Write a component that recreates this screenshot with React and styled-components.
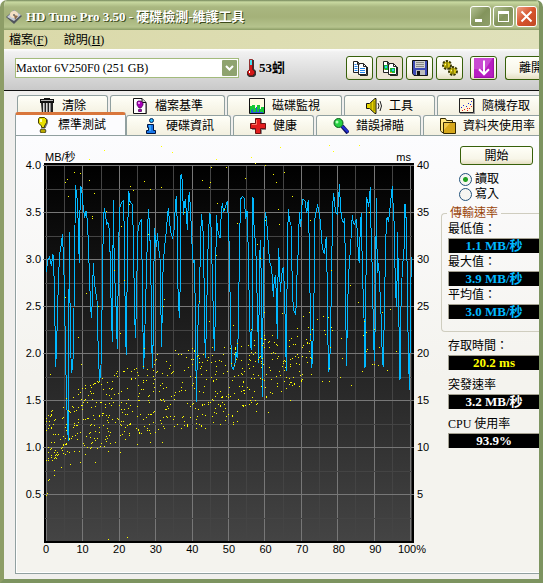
import React, { useState } from "react";
import styled, { createGlobalStyle } from "styled-components";

const GlobalStyle = createGlobalStyle`
  * {
    box-sizing: border-box;
  }
  body {
    margin: 0;
    background: #ffffff;
    color: #000000;
    font-family: "Liberation Serif", "Noto Sans CJK TC", serif;
    font-size: 12px;
    line-height: 16px;
  }
  button, select, input {
    font: inherit;
    color: inherit;
    margin: 0;
  }
`;

/* ---------- icons ---------- */

const Icon = ({ size = 16, children }) => (
  <svg width={size} height={size} viewBox="0 0 16 16" aria-hidden="true">
    {children}
  </svg>
);

const DriveIcon = () => (
  <Icon>
    <path d="M0 8 L8 1 L16 7 L8 15 Z" fill="#50545c" />
    <path d="M1 8 L8 1 L15 6 L8 12 Z" fill="#c4cad6" />
    <ellipse cx="8" cy="5.500" rx="4" ry="3.500" fill="#f4dfc4" />
    <path d="M8 6 L12 7 L9 11 Z" fill="#8b6b4a" />
    <circle cx="8" cy="6" r="1" fill="#6a6a6a" />
  </Icon>
);

const TrashIcon = () => (
  <Icon>
    <path d="M5 0h6v1H5zM1 1h14v4H1z" fill="#111" />
    <path d="M2 2h12v1H2z" fill="#b5b5b5" />
    <path d="M2 5h12v11H3z" fill="#222" />
    <path d="M4 5h1v10H4zM7 5h1v10H7zM10 5h1v10h-1z" fill="#d8d8d8" />
    <path d="M5 5h1v10H5zM8 5h1v10H8zM11 5h1v10h-1z" fill="#8a8a8a" />
  </Icon>
);

const FileMarkIcon = () => (
  <Icon>
    <path d="M3 2h9l3 4v10H3z" fill="#777" />
    <path d="M1.500 .5h8.500l4 4v11H1.500z" fill="#fff" stroke="#111" />
    <path d="M10 .5v4h4" fill="#ccc" stroke="#111" />
    <path d="M6 3h3l2 2v2l-2 3H7L5 7V4z" fill="#a800b8" stroke="#42004a" strokeWidth=".7" />
    <path d="M6.500 11.500h3v2h-3z" fill="#a800b8" stroke="#42004a" strokeWidth=".7" />
    <path d="M6 4h2v2H6z" fill="#ef8cf6" />
  </Icon>
);

const MonitorIcon = () => (
  <Icon>
    <path d="M.5.5h15v15H.5z" fill="#fffbe0" stroke="#111" />
    <path d="M1 8h2V7h3v3h2V7h3v4h1V9h3v6H1z" fill="#16c934" />
    <path d="M2 12h1v-1h1v3h3V9h1v5h2v-3h1v3h3v1H2z" fill="#2456d8" />
  </Icon>
);

const SpeakerIcon = () => (
  <Icon>
    <path d="M.5 5.500h3L9 .5h1v15H9l-5.500-5h-3z" fill="#e7d600" stroke="#111" />
    <path d="M5 4v8M8 3v10" stroke="#807400" />
    <path d="M12 5q2 3 0 6M14 3q3 5 0 10" fill="none" stroke="#222" />
  </Icon>
);

const ScatterIcon = () => (
  <Icon>
    <path d="M1 1h15v15H1z" fill="#999" />
    <path d="M.5.5h14v14H.5z" fill="#fff6dc" stroke="#222" />
    <path d="M2 9h1v1H2zM4 7h1v1H4zM7 8h1v1H7zM9 5h1v1H9zM11 6h1v1h-1zM12 3h1v1h-1z" fill="#1727e0" />
    <path d="M3 12h1v1H3zM5 11h1v1H5zM8 12h1v1H8zM8 10h1v1H8zM10 10h1v1h-1zM12 8h1v1h-1z" fill="#e02020" />
  </Icon>
);

const BangIcon = () => (
  <Icon>
    <path d="M5 1h6l2 2v3l-2 4v1H7v-2L4 7V3z" fill="#777" />
    <path d="M4.500.5h5l2 2v3l-2 3.500v1.500h-3V9l-3-3V2z" fill="#e8df00" stroke="#474200" />
    <path d="M5 2h2v3H5z" fill="#ffffb0" />
    <path d="M6 12h4l1 2-1 2H6l-1-2z" fill="#b9a900" stroke="#222" strokeWidth=".8" />
  </Icon>
);

const InfoIcon = () => (
  <Icon>
    <circle cx="8.500" cy="2.500" r="2" fill="#22b8ff" stroke="#001c50" />
    <path d="M4.500 6.500h6v6h2v3h-9v-3h2v-3h-1z" fill="#1976e8" stroke="#001440" />
    <path d="M6 7h2v6H6z" fill="#39a8ff" />
  </Icon>
);

const CrossIcon = () => (
  <Icon>
    <path d="M6 1h6v5h4v6h-4v4H6v-4H2V6h4z" fill="#888" />
    <path d="M5.500.5h5v5h5v5h-5v5h-5v-5h-5v-5h5z" fill="#e21d1d" stroke="#6c1010" />
    <path d="M6.500 2v4.500H2" fill="none" stroke="#ff7c68" />
  </Icon>
);

const SearchIcon = () => (
  <Icon>
    <path d="M9 8l6 7" stroke="#101060" strokeWidth="4" />
    <path d="M9 8l6 6" stroke="#2330d8" strokeWidth="2" />
    <circle cx="5.500" cy="5" r="4.500" fill="#25cf42" stroke="#0b5c1d" />
    <circle cx="4" cy="4" r="1.500" fill="#b4ffb8" />
  </Icon>
);

const FolderIcon = () => (
  <Icon>
    <path d="M.5.5h5l1 2h6v12H2l-1.500-2z" fill="#ffe680" stroke="#342900" />
    <path d="M3.500 4.500h12v11h-12z" fill="#d6a71b" stroke="#342900" />
    <path d="M4 5h6l-6 7z" fill="#efc74a" />
  </Icon>
);

const CopyIcon = ({ picture }) => (
  <Icon>
    <path d="M1.500 1.500h4l3 3v8h-7z" fill="#fff" stroke="#222" />
    <path d="M6.500 3.500h5l3 3v8h-8z" fill="#fff" stroke="#222" />
    <path d="M11.500 3.500v3h3M5.500 1.500v3h2M15.500 7v8.500H8" fill="none" stroke="#222" />
    {picture ? (
      <>
        <path d="M2 5h4v5H2zM8 8h5v5H8z" fill="#16b43a" />
        <path d="M3 6h2v2H3zM10 9h2v2h-2z" fill="#2ec9ff" />
        <path d="M2 9h1v1H2zM8 12h2v1H8z" fill="#e8a020" />
      </>
    ) : (
      <path d="M2.500 4.500h2M2.500 6.500h3M2.500 8.500h3M2.500 10.500h3M8 8.500h5M8 10.500h5M8 12.500h5" stroke="#2385e8" />
    )}
  </Icon>
);

const SaveIcon = () => (
  <Icon>
    <path d="M.5.5h15v15H2l-1.500-2z" fill="#3c48b4" stroke="#111" />
    <path d="M3 1h10v7H3z" fill="#d0d0d0" />
    <path d="M4 2.500h8M4 4.500h8M4 6.500h8" stroke="#888" />
    <path d="M4 10h9v5H4z" fill="#bdbdbd" />
    <path d="M5 11h3v4H5z" fill="#111" />
  </Icon>
);

// Two gears, one overlapping the other.
const ToolsIcon = () => (
  <Icon>
    <circle cx="5" cy="5" r="3.500" fill="#d8c713" stroke="#3b3900" strokeWidth="3" strokeDasharray="2 1" />
    <circle cx="5" cy="5" r="3" fill="#d8c713" />
    <path d="M5 2v4M3 7h3" stroke="#5a5600" />
    <circle cx="11" cy="11" r="3.500" fill="#d8c713" stroke="#3b3900" strokeWidth="3" strokeDasharray="2 1" />
    <circle cx="11" cy="11" r="3" fill="#d8c713" />
    <path d="M11 8v4M9 13h3" stroke="#5a5600" />
    <path d="M3 4h1v1H3zM9 10h1v1H9z" fill="#fff9a0" />
  </Icon>
);

const DownIcon = () => (
  <Icon size={20}>
    <path d="M0 0h16v16H0z" fill="#a010ac" />
    <path d="M0 0h15v15H0z" fill="#b81fc2" />
    <path d="M0 0h15L9 9H0z" fill="#c94bd2" />
    <path d="M8 2v11M4 9l4 4 4-4" fill="none" stroke="#fff" strokeWidth="1.600" />
  </Icon>
);

const Thermometer = () => (
  <svg width="11" height="18" viewBox="0 0 11 18" aria-hidden="true">
    <path d="M4 1h4v9l2 2v4l-2 2H3l-2-2v-3l3-3z" fill="#333" />
    <path d="M3.500.5h3v10l2 2v2l-2 2h-3l-2-2v-2l2-2z" fill="#d31818" stroke="#701010" strokeWidth=".7" />
    <path d="M4 1h2v5H4z" fill="#45dff0" />
    <path d="M3 12h1v2H3z" fill="#fff" />
  </svg>
);

/* ---------- window frame ---------- */

const Window = styled.div`
  position: relative;
  display: flex;
  flex-direction: column;
  min-height: 100vh;
  border: solid;
  border-width: 0 4px 4px;
  border-color: #8d9d67 #7d9460 #7d9460 #8d9d67;
  border-radius: 7px 7px 0 0;
  background: #f0f0ee;
  overflow: hidden;
`;

const CornerMark = styled.svg`
  position: absolute;
  top: 0;
  left: -4px;
`;

const TitleBar = styled.header`
  display: flex;
  align-items: center;
  height: 30px;
  margin: 0 -4px;
  padding: 3px 6px 0 6px;
  background: linear-gradient(#73865a 0, #c9d9a1 2px, #a9b780 7px, #a4b179 17px, #b5c38d 27px, #8b9c65 30px);
`;

const Title = styled.h1`
  flex: 1;
  margin: 0 0 0 4px;
  color: #ffffff;
  font-size: 13px;
  line-height: 18px;
  text-shadow: 1px 1px 0 #3c4a1c;
  white-space: nowrap;
`;

const CaptionButtons = styled.div`
  display: flex;
  gap: 2px;
`;

const CaptionButton = styled.button`
  width: 21px;
  height: 21px;
  padding: 0;
  border: 1px solid #ffffff;
  border-radius: 3px;
  background: ${(props) =>
    props.$close
      ? "linear-gradient(135deg, #eda287, #d6532c 50%, #c04a24)"
      : "linear-gradient(135deg, #b3c193, #83945c 50%, #90a06c)"};

  svg {
    display: block;
  }
`;

const MenuBar = styled.nav`
  display: flex;
  gap: 16px;
  height: 19px;
  padding-left: 5px;
  background: linear-gradient(90deg, #dad9a9, #e0e1bb);
`;

const MenuItem = styled.button`
  padding: 0;
  border: 0;
  background: none;
  line-height: 18px;
`;

const Toolbar = styled.div`
  display: flex;
  align-items: center;
  height: 42px;
  padding: 0 0 3px 11px;
  border-bottom: 1px solid #101010;
  background: linear-gradient(#ffffff 0, #f1f1f1 3px, #c9c9c9 100%);
`;

const DriveField = styled.label`
  position: relative;
  flex: 0 1 224px;
  height: 20px;
`;

const DriveSelect = styled.select`
  display: block;
  width: 100%;
  height: 100%;
  padding: 0 20px 0 0;
  border: 1px solid #a3bb7c;
  border-radius: 0;
  background: #ffffff;
  appearance: none;
`;

const DropArrow = styled.svg`
  position: absolute;
  top: 2px;
  right: 2px;
  pointer-events: none;
`;

const Temperature = styled.output`
  display: flex;
  align-items: center;
  gap: 2px;
  margin: 0 auto 0 7px;
  font-size: 13px;
  font-weight: bold;
`;

const Actions = styled.div`
  display: flex;
  flex: none;
  gap: 3px;
`;

const PushButton = styled.button`
  display: flex;
  align-items: center;
  justify-content: center;
  height: ${(props) => (props.$tool ? "24px" : "19px")};
  width: ${(props) => (props.$tool ? "27px" : "73px")};
  padding: 0;
  border: 1px solid #37600a;
  border-radius: 3px;
  background: ${(props) =>
    props.$pressed ? "#ebe3d3" : "linear-gradient(#fffff8, #f7f5e8 70%, #e5dfc2)"};
`;

const ActionGroup = styled.div`
  display: flex;
  margin-left: 4px;
`;

const ExitButton = styled(PushButton)`
  justify-content: flex-start;
  height: 24px;
  width: 34px;
  padding-left: 13px;
  border-right: 0;
  border-radius: 3px 0 0 3px;
  margin-left: 5px;
  overflow: hidden;
  white-space: nowrap;
`;

/* ---------- tabs ---------- */

const Content = styled.main`
  display: flex;
  flex: 1;
  flex-direction: column;
  padding: 3px 0 5px 11px;
  background: #f0efed;
  overflow: hidden;
`;

const TabRow = styled.div`
  display: flex;
  align-items: flex-end;
  gap: 2px;
  height: ${(props) => (props.$front ? "20px" : "21px")};
  padding-left: ${(props) => (props.$front ? "0" : "2px")};
`;

const Tab = styled.button`
  display: flex;
  flex: none;
  align-items: center;
  gap: 7px;
  height: ${(props) => (props.$active ? "23px" : "20px")};
  padding: 0 ${(props) => (props.$active ? "19px" : props.$narrow ? "16px" : "21px")};
  margin-right: ${(props) => (props.$active ? "-2px" : "0")};
  border: solid #91a0a0;
  border-width: ${(props) => (props.$active ? "3px 1px 0" : "1px 1px 0")};
  border-top-color: ${(props) => (props.$active ? "#d9763c" : "#91a0a0")};
  border-radius: 3px 3px 0 0;
  background: ${(props) => (props.$active ? "#fcfcfe" : "linear-gradient(#fffff8, #f3f0e0)")};
  white-space: nowrap;
`;

const Panel = styled.section`
  display: flex;
  flex: 1;
  border: 1px solid #91a0a0;
  border-right: 0;
  background: linear-gradient(#fcfcfe, #f4f3ee 55%);
  box-shadow: inset 1px -1px 0 #ffffff;
`;

/* ---------- chart ---------- */

const Chart = styled.figure`
  display: grid;
  flex: 1;
  min-width: 0;
  grid-template-columns: 28px minmax(0, 1fr) 27px;
  grid-template-rows: 27px minmax(300px, 1fr) 30px;
  margin: 0;
  font-family: "Liberation Sans", "Noto Sans CJK TC", sans-serif;
  font-size: 11px;
  line-height: 12px;
`;

const Units = styled.figcaption`
  display: flex;
  grid-area: 1 / 2;
  align-items: flex-end;
  justify-content: space-between;
  padding: 0 3px 0 1px;
`;

const PlotFrame = styled.div`
  grid-area: 2 / 2;
  padding: 2px;
  background: #000000;
`;

const Plot = styled.svg`
  display: block;
  width: 100%;
  height: 100%;
  overflow: visible;
`;

const Scale = styled.div`
  display: flex;
  flex-direction: column;
  grid-area: 2 / ${(props) => (props.$align === "right" ? 1 : 3)};
  justify-content: space-between;
  padding: 2px 3px;
  text-align: ${(props) => props.$align};
`;

const ScaleLabel = styled.span`
  height: 0;
  line-height: 0;
`;

const Percents = styled.div`
  display: flex;
  grid-area: 3 / 2;
  justify-content: space-between;
  padding: 0 2px;
`;

const Percent = styled.span`
  display: flex;
  justify-content: center;
  width: 0;
`;

// Transfer rate curve, three units per pixel, origin of the plot at 93,60.
const transfer = `
94,380 98,345 104,335 109,363 114,328 118,415 122,667 124,620 127,530 130,415 133,345 136,310
139,300 142,268 146,340 149,485 152,650 155,765 158,850 160,888 161,630 163,260 166,575 168,640
170,684 173,660 175,625 177,490 180,245 181,121 185,150 188,178 191,300 193,353 196,124 200,130
204,180 209,220 213,197 217,225 220,290 224,415 229,520 232,470 235,355 238,410 241,435 246,465
248,540 250,630 254,712 258,660 262,440 265,230 268,190 271,205 275,240 278,230 284,260 287,425
292,590 295,165 298,375 302,450 307,613 311,300 314,190 320,172 326,168 329,340 331,560 334,630
338,260 341,137 345,170 352,178 355,270 358,460 361,580 364,495 368,265 372,240 379,222 382,400
384,560 386,672 390,540 394,400 397,285 400,192 403,230 407,340 410,575 412,668 415,570 418,250
421,280 425,305 427,265 431,310 435,340 437,460 440,607 443,400 448,310 452,280 456,230 460,190
464,235 468,265 473,278 478,250 481,180 484,152 487,240 488,410 493,520 496,405 498,90 500,88
503,125 505,210 508,180 511,163 514,200 517,255 520,170 523,140 526,185 529,250 532,320 535,355
538,345 541,490 544,770 547,630 550,500 553,465 556,320 559,207 563,240 566,290 568,500 571,640
574,555 577,400 580,270 584,205 587,215 589,275 593,430 598,617 601,510 604,210 608,255 615,280
619,205 622,175 626,200 631,185 637,168 640,220 643,320 645,440 648,600 650,665 655,672 660,655
663,620 667,640 671,525 673,310 677,162 682,155 688,160 692,222 696,197 699,290 703,480 706,600
710,615 713,450 714,157 718,265 722,295 724,365 729,560 731,655 733,380 736,285 739,408 742,755
745,410 748,260 751,200 754,220 757,255 761,315 764,350 770,370 775,455 778,400 781,395 784,445
787,583 790,310 793,350 796,440 800,390 805,365 808,430 811,545 814,678 817,315 820,192 823,225
828,240 832,420 835,495 841,505 844,480 847,350 850,320 853,200 857,245 862,163 870,167 875,205
880,165 883,310 886,505 890,668 893,640 898,400 900,220 904,195 908,182 913,205 917,240 922,310
928,328 934,275 937,430 940,682 943,670 946,605 949,430 953,180 956,145 959,180 963,205 967,208
971,165 973,118 976,175 979,215 986,235 988,220 991,330 994,662 998,500 1000,400 1004,345 1007,300
1011,225 1012,210 1015,235 1019,238 1024,222 1027,260 1030,330 1033,355 1036,240 1039,205 1042,370
1047,520 1050,668 1052,610 1053,400 1054,155 1058,170 1061,185 1066,127 1069,310 1072,370 1075,550
1078,648 1081,520 1084,160 1087,385 1091,355 1095,440 1099,530 1102,640 1105,667 1108,500 1111,345
1114,230 1117,215 1120,230 1123,208 1128,160 1132,122 1135,200 1138,240 1141,430 1145,487 1148,260
1151,490 1155,705 1158,485 1162,370 1167,315 1170,178 1174,230 1177,400 1180,640 1184,734 1187,430
1190,335`;

// Access time samples that stand apart from the main band.
const outliers = `
223,43 268,15 439,2 470,20 604,41 709,37 721,53 794,7 943,1 955,19 1033,1 149,112 157,103 160,154
178,82 196,85 223,106 238,145 232,214 232,220 274,199 151,457 190,577 214,445 250,484 298,376 316,565
319,244 328,406 346,124 355,136 343,178 388,109 406,133 400,268 439,127 448,463 445,484 508,202 562,106
583,127 586,112 589,67 607,175 604,331 628,193 634,67 583,529 553,469 388,610 427,628 520,616 499,628
667,235 691,100 727,298 736,340 709,553 655,541 751,61 775,88 784,112 790,193 793,238 751,226 808,82
832,154 886,226 949,376 1006,421 1030,472 1063,202 1102,502 1126,493 1078,553 979,580 847,550 865,514
883,502 907,523 925,514 940,517 949,547 928,556 931,568 952,556 892,553 880,547 802,505 772,571 748,502
748,571 835,598 877,595 886,586 946,607 1054,562 1048,529 1045,571 1093,607 1144,619 1057,613 1054,619
94,1050 97,1043 100,1006 103,1003 118,991 118,974 280,1183 337,1177 241,952 106,688 199,658 139,967
166,958 196,952 210,928 316,922 280,919 367,898 406,892 442,892 448,850 544,850 571,850 616,838
629,825 654,832 655,838 667,828 760,802 754,752 724,799 724,776 826,766 853,724 1009,721 1042,679
922,709 943,709 976,695 943,670 982,638 1078,658 1117,676 1090,661 1072,658`;

const toPoints = (text) => text.trim().split(/\s+/).map((pair) => pair.split(",").map(Number));

const mix = (stops, x) => {
  const i = Math.min(stops.length - 2, Math.floor(x * (stops.length - 1)));
  const t = x * (stops.length - 1) - i;
  return stops[i] + (stops[i + 1] - stops[i]) * t;
};

const accessBand = () => {
  let seed = 4711;
  const next = () => {
    seed = (seed * 16807) % 2147483647;
    return seed / 2147483647;
  };
  const low = [960, 930, 900, 870, 850, 840, 800, 750, 700];
  const high = [810, 720, 680, 650, 610, 600, 590, 570, 560];
  return Array.from({ length: 610 }, () => {
    const x = Math.pow(next(), 1.2);
    const y = mix(low, x) + (mix(high, x) - mix(low, x)) * next();
    return [93 + Math.round(x * 265) * 3, Math.round(y / 3) * 3];
  });
};

const accessDots = [...toPoints(outliers), ...accessBand()];

const PlotArea = () => (
  <PlotFrame>
    <Plot viewBox="93 60 1098 1128" preserveAspectRatio="none" role="img" aria-label="MB/秒, ms">
      <defs>
        <linearGradient id="plot-fill" x1="0" y1="0" x2="0" y2="1">
          <stop offset="0" stopColor="#000000" />
          <stop offset="1" stopColor="#444444" />
        </linearGradient>
      </defs>
      <rect x="93" y="60" width="1098" height="1128" fill="url(#plot-fill)" />
      <g shapeRendering="crispEdges">
        {[1, 0].map((minor) =>
          Array.from({ length: 21 - minor }, (_, i) => i)
            .filter((i) => i % 2 === minor)
            .map((i) => (
              <rect key={`v${i}`} x={93 + Math.round(i * 18.2) * 3} y="60" width="3" height="1128" fill={minor ? "#444444" : "#777777"} />
            ))
        )}
        {[1, 0].map((minor) =>
          Array.from({ length: 16 }, (_, i) => i)
            .filter((i) => i % 2 === minor)
            .map((i) => (
              <rect key={`h${i}`} x={minor ? 90 : 84} y={60 + Math.round(i * 23.5) * 3} width={minor ? 1101 : 1113} height="3" fill={minor ? "#444444" : "#777777"} />
            ))
        )}
        <polyline
          points={transfer}
          fill="none"
          stroke="#00b8ff"
          strokeWidth="1"
          vectorEffect="non-scaling-stroke"
        />
        {accessDots.map(([x, y], i) => (
          <rect key={i} x={Math.round(x / 3) * 3} y={Math.round(y / 3) * 3} width="3" height="3" fill="#ffff00" />
        ))}
      </g>
    </Plot>
  </PlotFrame>
);

const rates = ["4.0", "3.5", "3.0", "2.5", "2.0", "1.5", "1.0", "0.5", ""];
const times = ["40", "35", "30", "25", "20", "15", "10", "5", ""];
const percents = ["0", "10", "20", "30", "40", "50", "60", "70", "80", "90", "100%"];

/* ---------- results ---------- */

const Results = styled.aside`
  flex: none;
  width: 98px;
  padding-top: 10px;
`;

const StartButton = styled(PushButton)`
  margin-left: 19px;
`;

const Modes = styled.div`
  display: grid;
  gap: 1px;
  padding: 7px 0 0 18px;
`;

const Mode = styled.label`
  display: flex;
  align-items: center;
  gap: 3px;
  height: 14px;
`;

const Radio = styled.input`
  width: 13px;
  height: 13px;
  border: 1px solid #21517a;
  border-radius: 50%;
  background: #f6f6f2;
  appearance: none;

  &:checked {
    background: radial-gradient(#21a121 0 2px, #f6f6f2 3px);
  }
`;

const RateGroup = styled.fieldset`
  min-width: 0;
  margin: 5px 0 0;
  padding: 0 0 12px 6px;
  border: 1px solid #cfcdbf;
  border-right: 0;
  border-radius: 4px 0 0 4px;
`;

const Legend = styled.legend`
  padding: 0 3px;
  margin-left: -1px;
  color: #99450a;
  line-height: 14px;
`;

const Metrics = styled.div`
  display: grid;
  gap: 6px;
  padding: 5px 0 0 7px;
`;

const Metric = styled.div`
  padding-top: 1px;
  line-height: 17px;
`;

const Value = styled.output`
  display: block;
  height: 15px;
  border: solid #a3a091;
  border-width: 1px 0 0 1px;
  background: #000000;
  color: ${(props) => props.$color};
  font-size: 13px;
  font-weight: bold;
  line-height: 14px;
  text-align: center;
`;

const Reading = ({ id, label, value, color }) => (
  <Metric>
    <label htmlFor={id}>{label}</label>
    <Value id={id} $color={color}>
      {value}
    </Value>
  </Metric>
);

const backTabs = [
  ["清除", TrashIcon],
  ["檔案基準", FileMarkIcon],
  ["磁碟監視", MonitorIcon],
  ["工具", SpeakerIcon],
  ["隨機存取", ScatterIcon],
];

const frontTabs = [
  ["標準測試", BangIcon],
  ["硬碟資訊", InfoIcon],
  ["健康", CrossIcon],
  ["錯誤掃瞄", SearchIcon],
  ["資料夾使用率", FolderIcon],
];

const App = () => {
  const [mode, setMode] = useState("read");

  return (
    <>
      <GlobalStyle />
      <Window>
        <TitleBar>
          <DriveIcon />
          <Title>HD Tune Pro 3.50 - 硬碟檢測-維護工具</Title>
          <CaptionButtons>
            <CaptionButton aria-label="Minimize">
              <svg width="19" height="19" viewBox="0 0 19 19">
                <path d="M4 12h7v3H4z" fill="#fff" />
              </svg>
            </CaptionButton>
            <CaptionButton aria-label="Maximize">
              <svg width="19" height="19" viewBox="0 0 19 19">
                <path d="M4 4h11v11H4zM5 7v7h9V7z" fill="#fff" fillRule="evenodd" />
              </svg>
            </CaptionButton>
            <CaptionButton $close aria-label="Close">
              <svg width="19" height="19" viewBox="0 0 19 19">
                <path d="M4.500 4.500l10 10M14.500 4.500l-10 10" stroke="#fff" strokeWidth="2" />
              </svg>
            </CaptionButton>
          </CaptionButtons>
        </TitleBar>
        <CornerMark width="5" height="5" viewBox="0 0 5 5" aria-hidden="true">
          <path d="M0 0h5v1H3v1H2v1H1v2H0z" fill="#fff" />
          <path d="M3 0h2v1H3zM1 1h1v1H1zM0 3h1v2H0z" fill="#1414e0" />
        </CornerMark>
        <MenuBar>
          <MenuItem>
            檔案(<u>F</u>)
          </MenuItem>
          <MenuItem>
            說明(<u>H</u>)
          </MenuItem>
        </MenuBar>
        <Toolbar>
          <DriveField>
            <DriveSelect aria-label="Drive">
              <option>Maxtor 6V250F0 (251 GB)</option>
            </DriveSelect>
            <DropArrow width="15" height="16" viewBox="0 0 15 16" aria-hidden="true">
              <rect width="15" height="16" rx="1" fill="#8fa36f" />
              <path d="M4 6l3.500 3.500L11 6" fill="none" stroke="#fff" strokeWidth="2" />
            </DropArrow>
          </DriveField>
          <Temperature>
            <Thermometer />
            53蚓
          </Temperature>
          <Actions>
            <PushButton $tool aria-label="Copy text">
              <CopyIcon />
            </PushButton>
            <PushButton $tool $pressed aria-label="Copy picture">
              <CopyIcon picture />
            </PushButton>
            <PushButton $tool aria-label="Save">
              <SaveIcon />
            </PushButton>
            <PushButton $tool aria-label="Options">
              <ToolsIcon />
            </PushButton>
            <ActionGroup>
              <PushButton $tool aria-label="Download">
                <DownIcon />
              </PushButton>
            </ActionGroup>
            <ExitButton>離開</ExitButton>
          </Actions>
        </Toolbar>
        <Content>
          <div role="tablist">
            <TabRow>
              {backTabs.map(([label, TabIcon]) => (
                <Tab key={label} role="tab" aria-selected="false">
                  <TabIcon />
                  {label}
                </Tab>
              ))}
            </TabRow>
            <TabRow $front>
              {frontTabs.map(([label, TabIcon], i) => (
                <Tab key={label} role="tab" aria-selected={i === 0} $active={i === 0} $narrow>
                  <TabIcon />
                  {label}
                </Tab>
              ))}
            </TabRow>
          </div>
          <Panel role="tabpanel" aria-label="標準測試">
            <Chart>
              <Units>
                <span>MB/秒</span>
                <span>ms</span>
              </Units>
              <Scale $align="right">
                {rates.map((rate) => (
                  <ScaleLabel key={rate}>{rate}</ScaleLabel>
                ))}
              </Scale>
              <PlotArea />
              <Scale $align="left">
                {times.map((time) => (
                  <ScaleLabel key={time}>{time}</ScaleLabel>
                ))}
              </Scale>
              <Percents>
                {percents.map((percent) => (
                  <Percent key={percent}>{percent}</Percent>
                ))}
              </Percents>
            </Chart>
            <Results>
              <StartButton>開始</StartButton>
              <Modes>
                <Mode>
                  <Radio type="radio" name="mode" checked={mode === "read"} onChange={() => setMode("read")} />
                  讀取
                </Mode>
                <Mode>
                  <Radio type="radio" name="mode" checked={mode === "write"} onChange={() => setMode("write")} />
                  寫入
                </Mode>
              </Modes>
              <RateGroup>
                <Legend>傳輸速率</Legend>
                <Reading id="min" label="最低值：" value="1.1 MB/秒" color="#00b8ff" />
                <Reading id="max" label="最大值：" value="3.9 MB/秒" color="#00b8ff" />
                <Reading id="avg" label="平均值：" value="3.0 MB/秒" color="#00b8ff" />
              </RateGroup>
              <Metrics>
                <Reading id="access" label="存取時間：" value="20.2 ms" color="#ffff00" />
                <Reading id="burst" label="突發速率" value="3.2 MB/秒" color="#ffffff" />
                <Reading id="cpu" label="CPU 使用率" value="93.9%" color="#ffffff" />
              </Metrics>
            </Results>
          </Panel>
        </Content>
      </Window>
    </>
  );
};

export default App;
